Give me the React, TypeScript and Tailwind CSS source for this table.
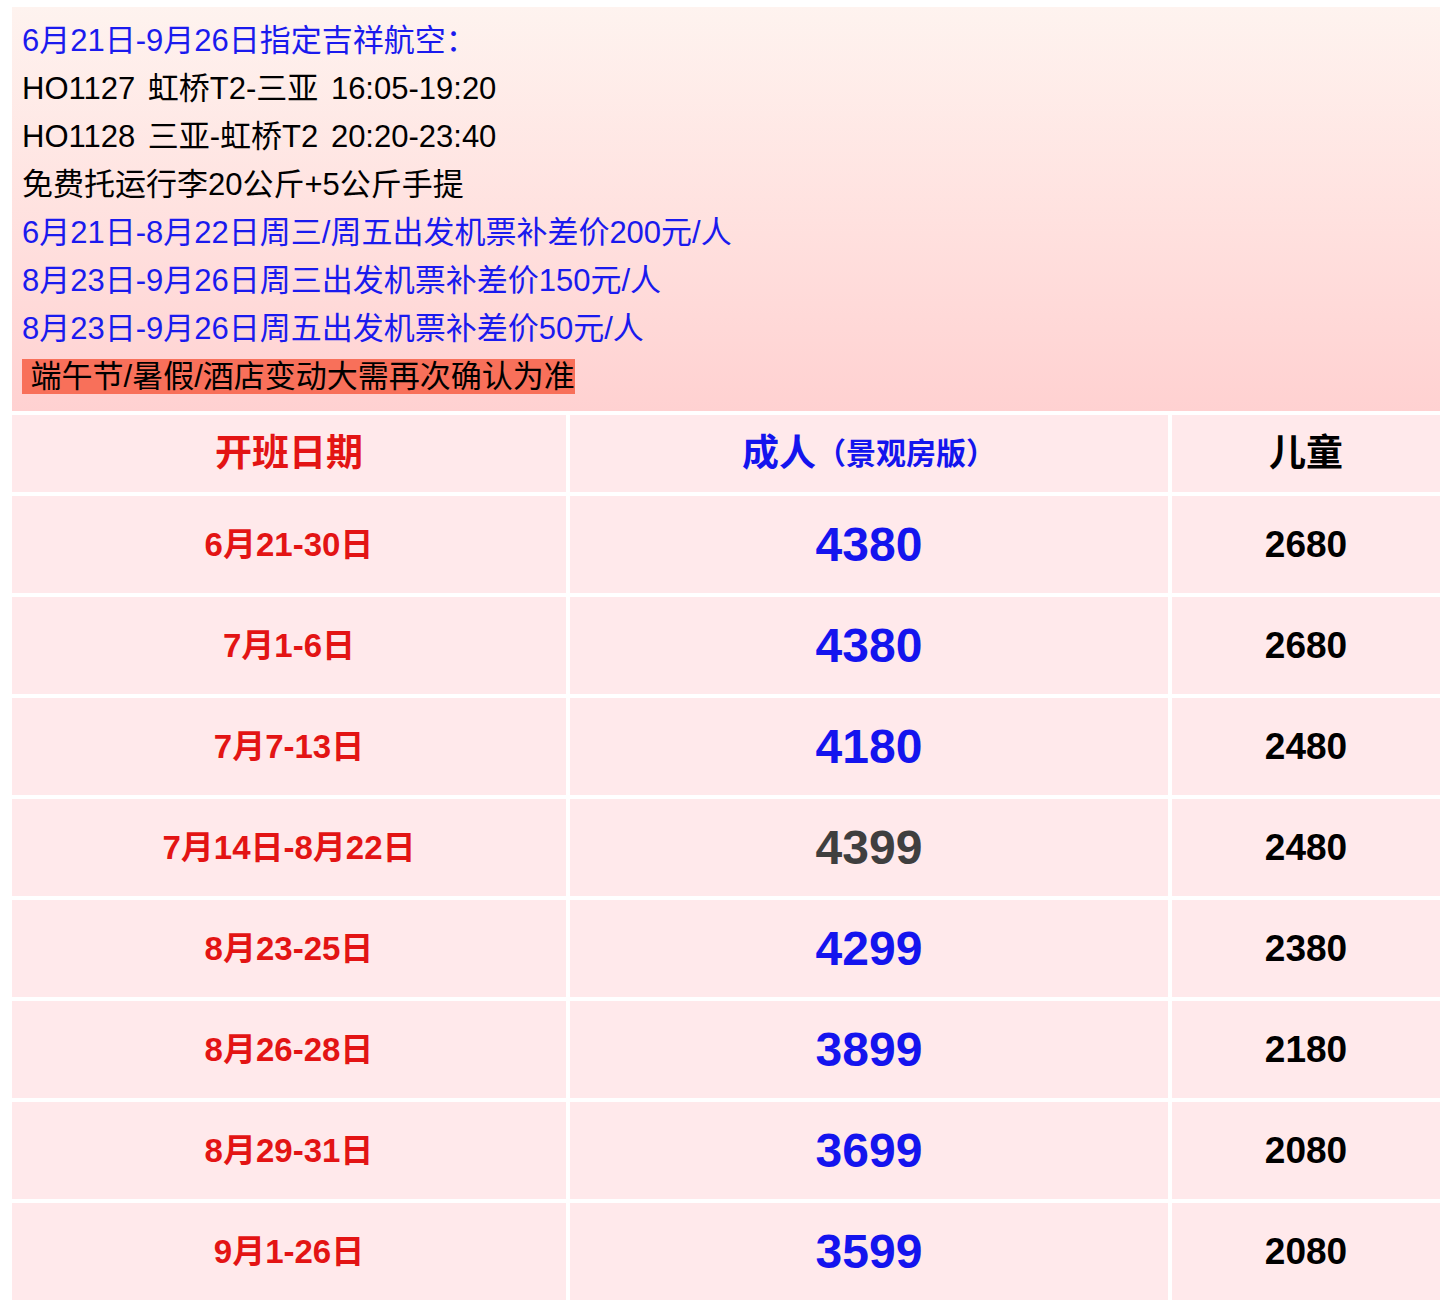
import React from "react";

const FONT = '"Liberation Sans", Arial, "Noto Sans CJK SC", sans-serif';

const rows: { date: string; adult: string; child: string; gray?: boolean }[] = [
  { date: "6月21-30日", adult: "4380", child: "2680" },
  { date: "7月1-6日", adult: "4380", child: "2680" },
  { date: "7月7-13日", adult: "4180", child: "2480" },
  { date: "7月14日-8月22日", adult: "4399", child: "2480", gray: true },
  { date: "8月23-25日", adult: "4299", child: "2380" },
  { date: "8月26-28日", adult: "3899", child: "2180" },
  { date: "8月29-31日", adult: "3699", child: "2080" },
  { date: "9月1-26日", adult: "3599", child: "2080" },
];

export default function App() {
  return (
    <div
      className="bg-white w-[1451px] min-h-[1307px] pt-[7px] pl-[12px] pr-[11px] pb-[7px]"
      style={{ fontFamily: FONT }}
    >
      <div className="bg-gradient-to-b from-[#fef3ef] to-[#ffd1d1] px-[10px] py-[10px] text-[31px] leading-[48px] text-black">
        <div className="text-[#1a1aee]">6月21日-9月26日指定吉祥航空：</div>
        <div className="[word-spacing:4px]">HO1127 虹桥T2-三亚 16:05-19:20</div>
        <div className="[word-spacing:4px]">HO1128 三亚-虹桥T2 20:20-23:40</div>
        <div>免费托运行李20公斤+5公斤手提</div>
        <div className="text-[#1a1aee]">6月21日-8月22日周三/周五出发机票补差价200元/人</div>
        <div className="text-[#1a1aee]">8月23日-9月26日周三出发机票补差价150元/人</div>
        <div className="text-[#1a1aee]">8月23日-9月26日周五出发机票补差价50元/人</div>
        <div>
          <span className="bg-[#f8705a]">&nbsp;端午节/暑假/酒店变动大需再次确认为准</span>
        </div>
      </div>
      <div className="mt-[4px] grid grid-cols-[554px_598px_268px] gap-[4px] font-bold">
        <div className="h-[77px] bg-[#ffe9eb] flex items-center justify-center text-[37px] text-[#e31414]">
          开班日期
        </div>
        <div className="h-[77px] bg-[#ffe9eb] flex items-center justify-center text-[#1414ee]">
          <span className="text-[37px]">成人</span>
          <span className="text-[30px]">（景观房版）</span>
        </div>
        <div className="h-[77px] bg-[#ffe9eb] flex items-center justify-center text-[37px] text-black">
          儿童
        </div>
        {rows.map((r, i) => (
          <React.Fragment key={i}>
            <div className="h-[97px] bg-[#ffe9eb] flex items-center justify-center text-[33px] text-[#e31414]">
              {r.date}
            </div>
            <div
              className={
                "h-[97px] bg-[#ffe9eb] flex items-center justify-center text-[48px] " +
                (r.gray ? "text-[#3f3f3f]" : "text-[#1414ee]")
              }
            >
              {r.adult}
            </div>
            <div className="h-[97px] bg-[#ffe9eb] flex items-center justify-center text-[37px] text-black">
              {r.child}
            </div>
          </React.Fragment>
        ))}
      </div>
    </div>
  );
}
